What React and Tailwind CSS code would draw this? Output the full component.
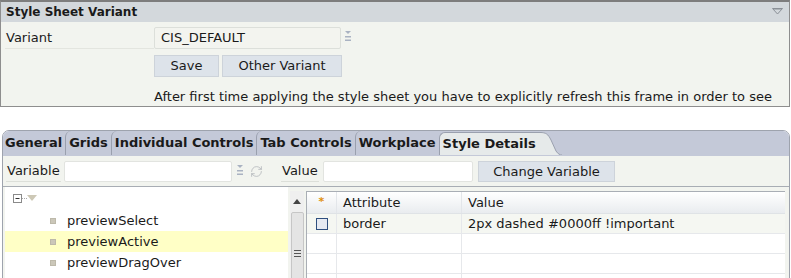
import { RefreshCw } from 'lucide-react'

const TABS = ['General', 'Grids', 'Individual Controls', 'Tab Controls', 'Workplace']
const TREE = ['previewSelect', 'previewActive', 'previewDragOver', 'li']

function ComboIcon() {
  return (
    <svg width="8" height="12" viewBox="0 0 8 12" className="shrink-0">
      <path d="M1 1h6L4 4z" fill="#a9b2c2" />
      <rect x="1" y="6" width="6" height="1.5" fill="#a9b2c2" />
      <rect x="1" y="9.5" width="6" height="1.5" fill="#a9b2c2" />
    </svg>
  )
}

export default function App() {
  return (
    <div className="w-[791px] h-[278px] overflow-hidden bg-white text-[13px] text-[#1a1a1a]"
         style={{ fontFamily: '"DejaVu Sans", Verdana, sans-serif' }}>

      {/* ── Style sheet variant panel ── */}
      <div className="w-[790px] h-[107px] border border-t-2 border-[#8e8e8e] border-t-[#7d7d7d] bg-[#f2f4ef] flex flex-col">
        <div className="h-[21px] bg-[#d3d8dc] flex items-center justify-between pl-[5px] pr-[6px]">
          <span className="font-bold text-[12px]">Style Sheet Variant</span>
          <svg width="11" height="7" viewBox="0 0 11 7"><path d="M0.5 0.5h10L5.5 6z" fill="none" stroke="#8a8f96" /><path d="M2 1h7" stroke="#8a8f96" /></svg>
        </div>
        <div className="flex items-center h-[29px] pt-[5px]">
          <div className="w-[149px] ml-[4px] h-[22px] pl-[1px] border-b border-[#e3e5df] flex items-center">Variant</div>
          <div className="w-[187px] h-[22px] border border-[#dcdfda] rounded-[2px] bg-[#f3f4ef] flex items-center pl-[6px]">CIS_DEFAULT</div>
          <div className="ml-[3px] mt-[-4px]"><ComboIcon /></div>
        </div>
        <div className="flex ml-[153px] mt-[5px] gap-[3px]">
          <button className="w-[65px] h-[22px] bg-[#dde3ea] border border-[#cdd3da]">Save</button>
          <button className="w-[120px] h-[22px] bg-[#dde3ea] border border-[#cdd3da]">Other Variant</button>
        </div>
        <div className="ml-[153px] mt-[10px] whitespace-nowrap">
          After first time applying the style sheet you have to explicitly refresh this frame in order to see
        </div>
      </div>

      {/* ── Tab panel ── */}
      <div className="ml-[2px] mt-[23px] w-[788px] h-[160px] border border-[#9ea3ad] rounded-tl-[7px] rounded-tr-[7px] overflow-hidden flex flex-col">
        <div className="h-[25px] bg-[#c4c9d8] flex items-end border-b border-[#c4c9d8] shrink-0">
          {TABS.map((t, i) => (
            <div key={t}
                 className={`h-[24px] flex items-center font-bold pr-[3px] ${i === 0 ? 'pl-[2px]' : 'pl-[3px] border-l border-[#9aa0ae] rounded-tl-[6px]'}`}>
              {t}
            </div>
          ))}
          <div className="h-[23px] pl-[3px] pr-[4px] flex items-center font-bold bg-[#e6eaea] border-l border-t border-[#9aa0ae] rounded-tl-[6px]">
            Style Details
          </div>
          <svg width="22" height="23" viewBox="0 0 22 23" className="shrink-0">
            <path d="M0 0.5 C6 0.5 8 2 11 8 L16 19 C18 22 20 23 22 23 L0 23Z" fill="#e6eaea" />
            <path d="M0 0.5 C6 0.5 8 2 11 8 L16 19 C18 22 20 23 22 23" fill="none" stroke="#9aa0ae" />
          </svg>
        </div>

        <div className="bg-[#f2f4ef] h-[30px] flex items-center shrink-0">
          <div className="ml-[3px] w-[55px] h-[22px] pl-[1px] border-b border-[#dcdfd9] flex items-center">Variable</div>
          <div className="ml-[3px] w-[168px] h-[21px] bg-white border border-[#e2e4e0] rounded-[2px]" />
          <div className="ml-[4px] mt-[-3px]"><ComboIcon /></div>
          <RefreshCw size={13} className="ml-[6px] text-[#b4b7bb]" strokeWidth={1.5} />
          <div className="ml-[18px] w-[38px] h-[22px] pl-[1px] border-b border-[#dcdfd9] flex items-center">Value</div>
          <div className="ml-[4px] w-[150px] h-[21px] bg-white border border-[#e2e4e0] rounded-[2px]" />
          <button className="ml-[5px] w-[137px] h-[21px] bg-[#dde3ea] border border-[#cdd3da]">Change Variable</button>
        </div>

        <div className="flex flex-1 border-t border-[#a8adb4] bg-[#f2f4ef]">
          {/* tree */}
          <div className="ml-[2px] w-[283px] bg-white flex flex-col">
            <div className="h-[23px] flex items-center pl-[8px]">
              <svg width="28" height="10" viewBox="0 0 28 10">
                <rect x="0.5" y="0.5" width="8" height="8" fill="white" stroke="#8a8a8a" />
                <path d="M2.5 4.5h4" stroke="#333" />
                <path d="M9 4.5h5" stroke="#aaa" strokeDasharray="1 1" />
                <path d="M14 1h10l-5 6z" fill="#cdc8b6" />
              </svg>
            </div>
            {TREE.map((n, i) => (
              <div key={n} className={`h-[21px] flex items-center pl-[45px] ${i === 1 ? 'bg-[#ffffc6]' : ''}`}>
                <span className="w-[6px] h-[6px] bg-[#cbc7b9] border border-[#bdb9aa]" />
                <span className="ml-[11px]">{n}</span>
              </div>
            ))}
          </div>
          {/* scrollbar */}
          <div className="ml-[2px] w-[14px] mt-[4px] bg-[#efefef] flex flex-col items-center">
            <svg width="8" height="5" viewBox="0 0 8 5" className="mt-[8px]"><path d="M0 5L4 0L8 5z" fill="#444" /></svg>
            <div className="mt-[8px] w-[13px] flex-1 bg-[#e4e4e4] border border-[#c6c6c6] rounded-[2px] flex items-center justify-center">
              <div className="flex flex-col gap-[2px]">
                <div className="w-[7px] h-[1px] bg-[#555]" />
                <div className="w-[7px] h-[1px] bg-[#555]" />
                <div className="w-[7px] h-[1px] bg-[#555]" />
              </div>
            </div>
          </div>
          {/* grid */}
          <div className="ml-[2px] mt-[4px] w-[479px] bg-white border-l border-t border-[#a9aeb5] flex flex-col">
            <div className="h-[22px] flex bg-gradient-to-b from-white to-[#e9ecef] border-b border-[#dfe3e6]">
              <div className="w-[30px] flex items-center justify-center border-r border-[#e3e6ea] text-[11px] font-bold">
                <span className="text-[#e0900a]">*</span>
              </div>
              <div className="w-[125px] pl-[6px] flex items-center border-r border-[#e3e6ea]">Attribute</div>
              <div className="flex-1 pl-[6px] flex items-center">Value</div>
            </div>
            {[0, 1, 2, 3].map(r => (
              <div key={r} className={`h-[20px] flex border-b border-[#e6e8eb] ${r === 0 ? 'bg-[#f5f7f2]' : ''}`}>
                <div className="w-[30px] flex items-center justify-center border-r border-[#e6e8eb]">
                  {r === 0 && <span className="w-[12px] h-[12px] border border-[#2f4f7f] bg-[#e6eaf2]" />}
                </div>
                <div className="w-[125px] pl-[6px] flex items-center border-r border-[#e6e8eb]">{r === 0 ? 'border' : ''}</div>
                <div className="flex-1 pl-[6px] flex items-center">{r === 0 ? '2px dashed #0000ff !important' : ''}</div>
              </div>
            ))}
          </div>
        </div>
      </div>
    </div>
  )
}
